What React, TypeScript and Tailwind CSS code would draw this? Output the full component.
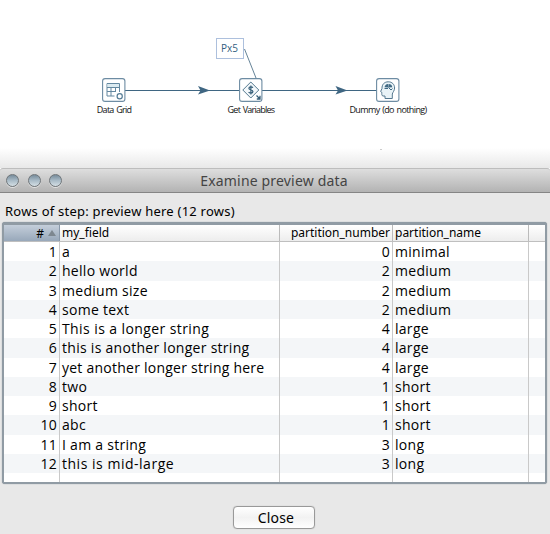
import type { ReactNode } from 'react';

type Row = { field: string; number: number; name: string; tracking?: string };

const rows: Row[] = [
  { field: 'a', number: 0, name: 'minimal' },
  { field: 'hello world', number: 2, name: 'medium' },
  { field: 'medium size', number: 2, name: 'medium' },
  { field: 'some text', number: 2, name: 'medium' },
  { field: 'This is a longer string', number: 4, name: 'large', tracking: 'tracking-[0.41px]' },
  { field: 'this is another longer string', number: 4, name: 'large' },
  { field: 'yet another longer string here', number: 4, name: 'large', tracking: 'tracking-[0.24px]' },
  { field: 'two', number: 1, name: 'short' },
  { field: 'short', number: 1, name: 'short' },
  { field: 'abc', number: 1, name: 'short' },
  { field: 'I am a string', number: 3, name: 'long' },
  { field: 'this is mid-large', number: 3, name: 'long', tracking: 'tracking-[0.52px]' },
];

const columns = 'grid grid-cols-[56px_220px_113px_136px_1fr]';

function Step({ place, label, labelStyle, children }: { place: string; label: string; labelStyle: string; children: ReactNode }) {
  return (
    <div className={`absolute top-[78px] flex w-6 flex-col items-center ${place}`}>
      <svg width="24" height="24" viewBox="0 0 24 24" fill="none" className="shrink-0">
        <rect x="0.6" y="0.6" width="22.3" height="22.8" rx="2.5" fill="#fff" stroke="#6d8ca3" strokeWidth="1.1" />
        {children}
      </svg>
      <span className={`mt-[1px] text-center text-[9px] leading-[14px] whitespace-nowrap text-[#111] ${labelStyle}`}>{label}</span>
    </div>
  );
}

function Canvas() {
  return (
    <section className="relative h-[148px] bg-white font-['Open_Sans',sans-serif]">
      <svg width="550" height="148" className="absolute inset-0 overflow-visible" fill="none">
        <path d="M125 90.5H239M262 90.5H377" stroke="#3f6682" strokeWidth="1.2" />
        <path d="M198 86L210 90.5L198 94.5L200.5 90.5ZM335.5 86L347.5 90.5L335.5 94.5L338 90.5Z" fill="#3f6682" />
        <path d="M244.5 49L256 78" stroke="#54758c" strokeWidth="0.9" />
      </svg>
      <div className="absolute top-[38px] left-[216px] flex h-[21px] w-7 items-center justify-center border border-[#adc0dd] bg-white pr-px text-[10px] text-[#33607f]">Px5</div>
      <Step place="left-[102px]" label="Data Grid" labelStyle="tracking-[-0.75px] [word-spacing:1px]">
        <path d="M12.5 18H5V5.5H17.5V14M5 9.5H17.5M5 13.5H14M9 9.5V18M13.5 9.5V13.5" stroke="#6488a0" strokeWidth="1" />
        <path d="M5.5 6H17V9H5.5Z" fill="#dbeaf0" />
        <circle cx="17.700" cy="18.200" r="2.600" fill="#fff" stroke="#557c96" strokeWidth="1.2" />
      </Step>
      <Step place="left-[239px]" label="Get Variables" labelStyle="tracking-[-0.75px] [word-spacing:1px]">
        <path d="M11.8 4L19.8 12L11.8 20L3.8 12Z" fill="#f3f8fb" stroke="#54798f" />
        <path d="M13.900 9.800C13.300 8.600 10 8.300 9.900 10.300C9.800 12.300 13.900 11.200 13.900 13.600C13.800 15.400 10.500 15.500 9.600 14M11.900 7.500V16.500" stroke="#365e78" strokeWidth="1.2" />
        <path d="M17.500 17.500L21 21M21 17.800V21H17.800" stroke="#365e78" strokeWidth="1.3" />
      </Step>
      <Step place="left-[376px]" label="Dummy (do nothing)" labelStyle="tracking-[-0.63px] [word-spacing:1px]">
        <path d="M9 20.500V18H7C5.500 18 5.800 15.500 5.800 14.300L4.600 13.500L6 10.500C5.800 6.500 8.400 3.800 12.200 3.800C16 3.800 18.600 6.300 18.600 10C18.600 12.700 16.800 14.100 16.300 16V20.500Z" fill="#e9f3f7" stroke="#55788f" strokeWidth="1" />
        <path d="M12.300 9.500L8.500 9.200A4 4 0 0 1 12 6ZM12.500 9.500V6A3.800 3.800 0 0 1 16.300 9.300Z" fill="#416a84" />
        <path d="M8.500 10.500H12M12.500 9.500L15 12L16.500 10.500" stroke="#416a84" />
      </Step>
    </section>
  );
}

function TitleBar() {
  return (
    <header className="grid h-[25px] grid-cols-[1fr_auto_1fr] items-center rounded-t-[3px] border-t border-b border-t-[#bdbdbd] border-b-[#858585] bg-linear-to-b from-[#dedede] to-[#b3b3b3]">
      <div className="flex gap-[8.5px] pl-1.5">
        {[0, 1, 2].map((i) => (
          <span key={i} className="h-[13px] w-[13px] rounded-full border border-[#6f7579] bg-linear-to-b from-[#778c9b] via-[#a9bbc7] to-[#d5dfe5] shadow-[0_1px_0_#e2e2e2]" />
        ))}
      </div>
      <h1 className="pr-[2px] text-[14px] leading-4 tracking-[0.17px] text-[#444]">Examine preview data</h1>
    </header>
  );
}

function PreviewTable() {
  return (
    <div className="mx-[2px] mr-[3px] h-[262px] rounded-[3px] border-2 border-t-[3px] border-[#909ba4] bg-white shadow-[0_0_1px_#76838d]">
      <div className={`${columns} h-[17px] border-b border-[#bfbfbf] bg-linear-to-b from-white to-[#ededed] text-[12px] leading-[15px]`}>
        <div className="flex items-center justify-end gap-1 border-r border-[#8898aa] bg-linear-to-b from-[#c4ceda] to-[#98a8ba] pr-[3px] text-[12px]">
          #<span className="border-x-4 border-b-[6px] border-x-transparent border-b-[#7d8790]" />
        </div>
        <div className="border-r border-[#bbb] pl-[2px]">my_field</div>
        <div className="border-r border-[#bbb] pr-[2px] text-right">partition_number</div>
        <div className="border-r border-[#bbb] pl-[2px]">partition_name</div>
      </div>
      <div className={`${columns} h-[240px] bg-white font-['Open_Sans',sans-serif]`}>
        <div className="border-r border-[#c9c9c9] text-right">
          {rows.map((_, i) => <Cell key={i} index={i} edge="pr-[2px]">{i + 1}</Cell>)}
        </div>
        <div className="border-r border-[#c9c9c9]">
          {rows.map((r, i) => <Cell key={i} index={i} edge="pl-[2px]" tracking={r.tracking}>{r.field}</Cell>)}
        </div>
        <div className="border-r border-[#c9c9c9] text-right">
          {rows.map((r, i) => <Cell key={i} index={i} edge="pr-[2px]">{r.number}</Cell>)}
        </div>
        <div className="border-r border-[#c9c9c9]">
          {rows.map((r, i) => <Cell key={i} index={i} edge="pl-[2px]">{r.name}</Cell>)}
        </div>
        <div>{rows.map((_, i) => <Cell key={i} index={i} edge="" />)}</div>
      </div>
    </div>
  );
}

function Cell({ index, edge, tracking = 'tracking-[0.28px]', children }: { index: number; edge: string; tracking?: string; children?: ReactNode }) {
  return (
    <div className={`h-[19.25px] text-[14px] leading-[19px] whitespace-nowrap ${tracking} ${index % 2 ? 'bg-[#f4f6f8]' : 'bg-white'} ${edge}`}>{children}</div>
  );
}

export default function App() {
  return (
    <main className="h-[534px] w-[550px] overflow-hidden bg-white font-['Noto_Sans',sans-serif] text-black">
      <Canvas />
      <div className="h-5 bg-linear-to-b from-white to-[#e8e8e8]">
        <div className="ml-[380px] h-[2px] w-[2px] border-b border-[#ccc]" />
      </div>
      <section className="h-[366px] rounded-t-[3px] bg-[#e8e8e8]">
        <TitleBar />
        <p className="h-[29px] pt-[9px] pl-[5px] text-[13px] leading-[19px] tracking-[0.23px]">Rows of step: preview here (12 rows)</p>
        <PreviewTable />
        <div className="flex justify-center pt-[22px] pr-[2px]">
          <button className="h-[23px] w-[82px] rounded-[4px] border border-[#999] bg-linear-to-b from-white via-[#f2f2f2] to-white pl-1 text-[14px] leading-5 tracking-[0.15px] shadow-[0_0_1px_#aaa]">Close</button>
        </div>
      </section>
    </main>
  );
}
